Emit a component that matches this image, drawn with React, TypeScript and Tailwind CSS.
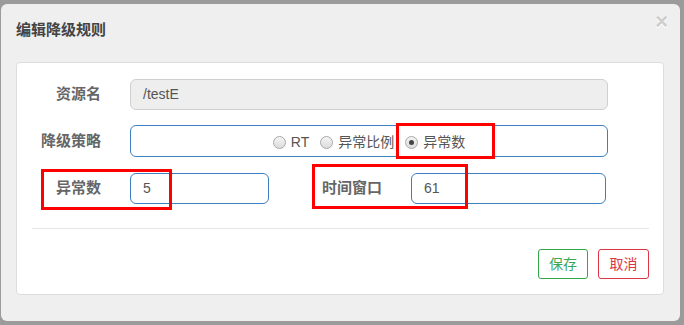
import { useState } from "react";

const font = "font-['Liberation_Sans','Noto_Sans_CJK_SC',sans-serif]";

function Radio({ label, checked, onSelect }: { label: string; checked: boolean; onSelect: () => void }) {
  return (
    <label className="flex items-center gap-[5px] cursor-pointer" onClick={onSelect}>
      <span className="w-[13px] h-[13px] rounded-full border border-[#a9a9a9] bg-gradient-to-b from-[#f4f4f4] to-[#dcdcdc] flex items-center justify-center">
        {checked && <span className="w-[5px] h-[5px] rounded-full bg-[#444]"></span>}
      </span>
      <span className="text-[14px] text-[#555]">{label}</span>
    </label>
  );
}

export default function App() {
  const [strategy, setStrategy] = useState("count");

  return (
    <div className={`w-[684px] h-[325px] overflow-hidden bg-[#9b9b9b] pt-[4px] pl-[1px] ${font}`}>
      <div className="relative w-[679px] h-[317px] rounded-[6px] bg-[#efefef]">
        <div className="h-[52px] flex items-center pl-[15px]">
          <h4 className="text-[15px] font-bold text-[#444]">编辑降级规则</h4>
        </div>
        <button className="absolute right-[12px] top-[7px] text-[22px] font-bold leading-none text-black/20 [text-shadow:0_1px_0_#fff]">
          ×
        </button>

        <div className="relative ml-[15px] mt-[6px] w-[648px] h-[233px] bg-white border border-[#dcdcdc] rounded-[4px]">
          <div className="pt-[16px] flex flex-col">
            {/* resource name */}
            <div className="flex items-center h-[31px]">
              <div className="w-[84px] text-right text-[15px] font-bold text-[#666]">资源名</div>
              <div className="ml-[29px] w-[478px] h-[31px] rounded-[6px] border border-[#cfcfcf] bg-[#eeeeee] flex items-center pl-[12px] text-[14px] text-[#555]">
                /testE
              </div>
            </div>

            {/* strategy */}
            <div className="flex items-center h-[32px] mt-[15px]">
              <div className="w-[84px] text-right text-[15px] font-bold text-[#666]">降级策略</div>
              <div className="ml-[29px] w-[478px] h-[32px] rounded-[6px] border border-[#3d7fc0] flex items-center justify-center gap-[11px] pt-[2px]">
                <Radio label="RT" checked={strategy === "rt"} onSelect={() => setStrategy("rt")} />
                <Radio label="异常比例" checked={strategy === "ratio"} onSelect={() => setStrategy("ratio")} />
                <Radio label="异常数" checked={strategy === "count"} onSelect={() => setStrategy("count")} />
              </div>
            </div>

            {/* count + window */}
            <div className="flex items-center h-[31px] mt-[16px]">
              <div className="w-[84px] text-right text-[15px] font-bold text-[#666]">异常数</div>
              <div className="ml-[29px] w-[139px] h-[31px] rounded-[6px] border border-[#3d7fc0] flex items-center pl-[12px] text-[14px] text-[#555]">
                5
              </div>
              <div className="ml-[51px] w-[62px] text-right text-[15px] font-bold text-[#666]">时间窗口</div>
              <div className="ml-[29px] w-[195px] h-[31px] rounded-[6px] border border-[#3d7fc0] flex items-center pl-[12px] text-[14px] text-[#555]">
                61
              </div>
            </div>

            <div className="ml-[15px] mt-[24px] w-[617px] border-t border-[#e5e5e5]"></div>

            <div className="flex justify-end gap-[10px] pr-[14px] mt-[20px]">
              <button className="w-[50px] h-[30px] rounded-[3px] border border-[#2fa84a] text-[14px] text-[#3aa856] bg-white">
                保存
              </button>
              <button className="w-[51px] h-[30px] rounded-[3px] border border-[#dc3545] text-[14px] text-[#dc3545] bg-white">
                取消
              </button>
            </div>
          </div>

          {/* red annotation boxes */}
          <div className="absolute left-[379px] top-[60px] w-[99px] h-[36px] border-[3px] border-[#ff0000]"></div>
          <div className="absolute left-[24px] top-[106px] w-[131px] h-[41px] border-[3px] border-[#ff0000]"></div>
          <div className="absolute left-[295px] top-[101px] w-[156px] h-[45px] border-[3px] border-[#ff0000]"></div>
        </div>
      </div>
    </div>
  );
}
